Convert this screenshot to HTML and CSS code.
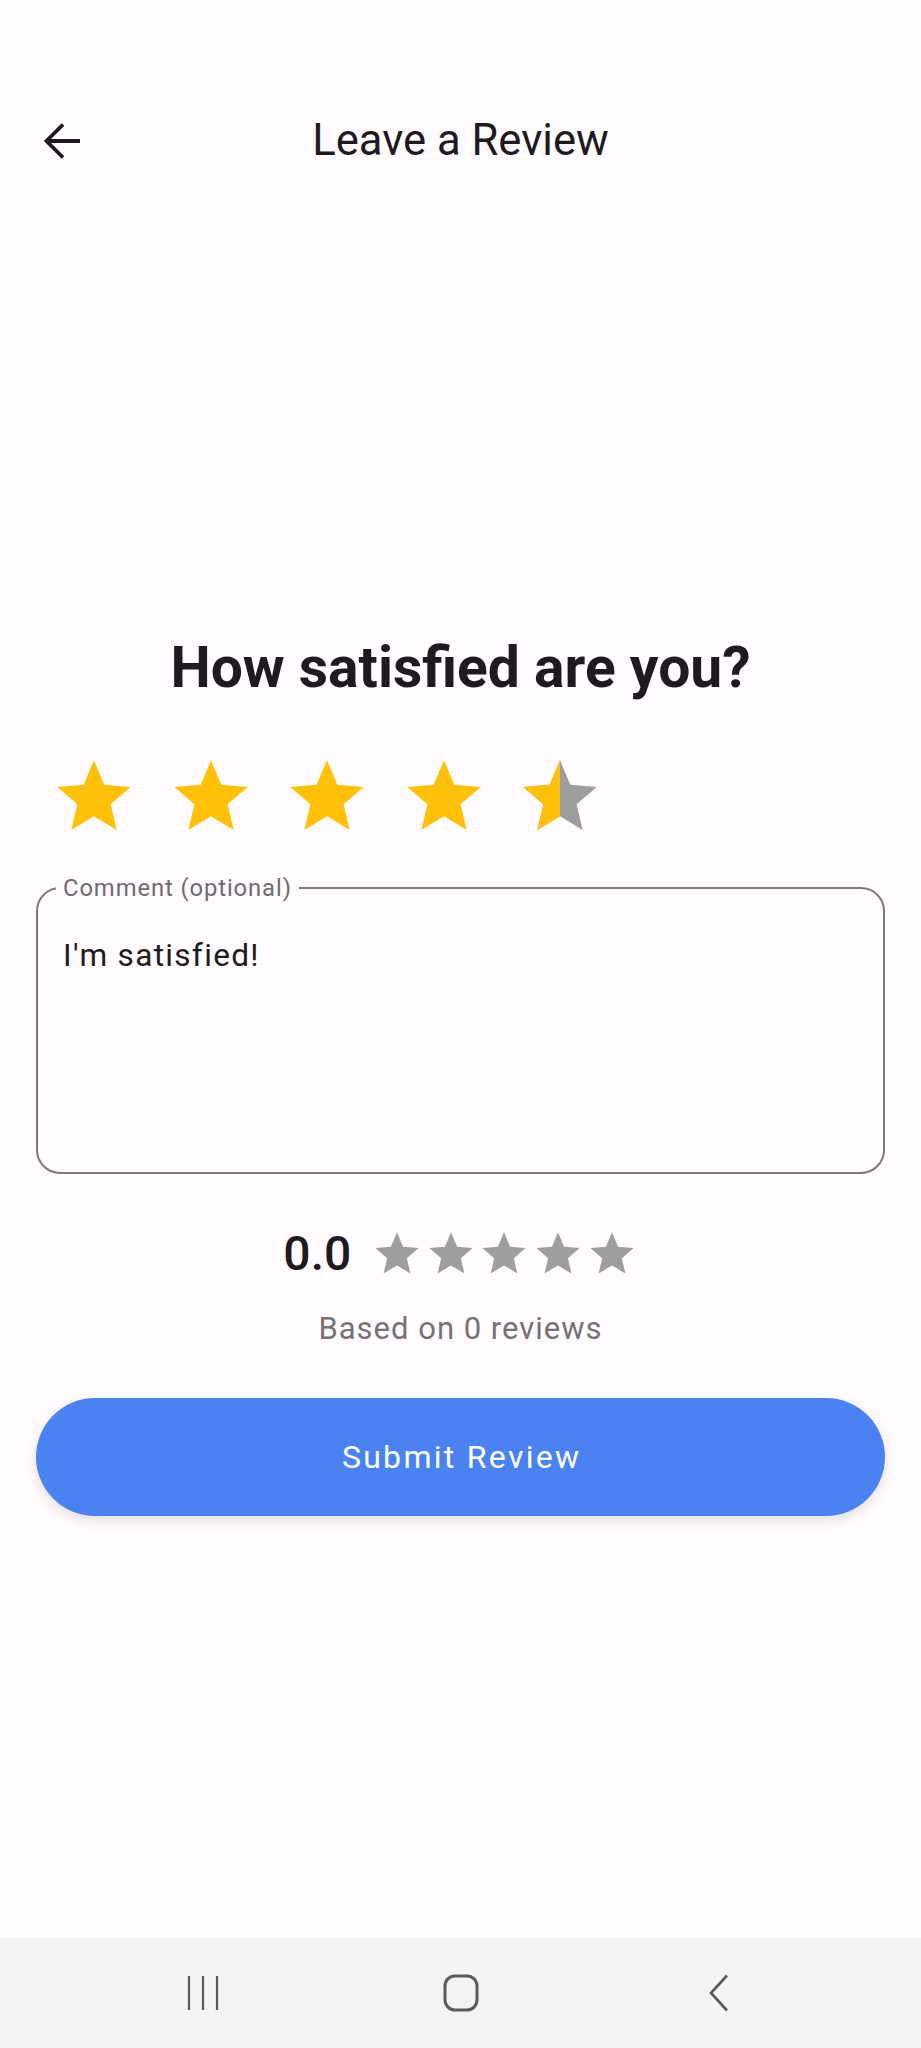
FILE: index.html
```html
<!DOCTYPE html>
<html lang="en">
<head>
<meta charset="utf-8">
<title>Leave a Review</title>
<link rel="stylesheet" href="styles.css">
</head>
<body>
<div class="screen">
  <div class="status-bar"></div>
  <header class="app-bar">
    <button class="back" aria-label="Back">
      <svg width="52" height="52" viewBox="0 0 52 52"><path d="M44 26H10.5M27 9.5L10.5 26 27 42.5" fill="none" stroke="#1d1b20" stroke-width="3.8"/></svg>
    </button>
    <h1 class="title">Leave a Review</h1>
    <span></span>
  </header>

  <main class="content">
    <h2 class="heading">How satisfied are you?</h2>

    <div class="stars">
      <svg class="star" viewBox="0 0 24 24"><path class="on" d="M12 17.27L18.18 21l-1.64-7.03L22 9.24l-7.19-.61L12 2 9.19 8.630 2 9.24l5.46 4.73L5.82 21z"/></svg>
      <svg class="star" viewBox="0 0 24 24"><path class="on" d="M12 17.27L18.18 21l-1.64-7.03L22 9.24l-7.19-.61L12 2 9.19 8.63 2 9.24l5.46 4.73L5.82 21z"/></svg>
      <svg class="star" viewBox="0 0 24 24"><path class="on" d="M12 17.27L18.18 21l-1.64-7.03L22 9.24l-7.19-.61L12 2 9.19 8.63 2 9.24l5.46 4.73L5.82 21z"/></svg>
      <svg class="star" viewBox="0 0 24 24"><path class="on" d="M12 17.27L18.18 21l-1.64-7.03L22 9.24l-7.19-.61L12 2 9.19 8.63 2 9.24l5.46 4.73L5.82 21z"/></svg>
      <svg class="star" viewBox="0 0 24 24">
        <defs><clipPath id="half"><rect x="0" y="0" width="12" height="24"/></clipPath></defs>
        <path class="off" d="M12 17.27L18.18 21l-1.64-7.03L22 9.24l-7.19-.61L12 2 9.19 8.63 2 9.24l5.46 4.73L5.82 21z"/>
        <path class="on" clip-path="url(#half)" d="M12 17.27L18.18 21l-1.64-7.03L22 9.24l-7.19-.61L12 2 9.19 8.63 2 9.24l5.46 4.73L5.82 21z"/>
      </svg>
    </div>

    <fieldset class="comment">
      <legend class="comment-label">Comment (optional)</legend>
      <div class="comment-text">I'm satisfied!</div>
    </fieldset>

    <div class="rating">
      <span class="score">0.0</span>
      <div class="mini-stars">
        <svg class="mini" viewBox="0 0 24 24"><path d="M12 17.27L18.18 21l-1.64-7.03L22 9.24l-7.19-.61L12 2 9.19 8.63 2 9.24l5.46 4.73L5.82 21z"/></svg>
        <svg class="mini" viewBox="0 0 24 24"><path d="M12 17.27L18.18 21l-1.64-7.03L22 9.24l-7.19-.61L12 2 9.19 8.63 2 9.24l5.46 4.73L5.82 21z"/></svg>
        <svg class="mini" viewBox="0 0 24 24"><path d="M12 17.27L18.18 21l-1.64-7.03L22 9.24l-7.19-.61L12 2 9.19 8.63 2 9.24l5.46 4.73L5.82 21z"/></svg>
        <svg class="mini" viewBox="0 0 24 24"><path d="M12 17.27L18.18 21l-1.64-7.03L22 9.24l-7.19-.61L12 2 9.19 8.63 2 9.24l5.46 4.73L5.82 21z"/></svg>
        <svg class="mini" viewBox="0 0 24 24"><path d="M12 17.27L18.18 21l-1.64-7.03L22 9.24l-7.19-.61L12 2 9.19 8.63 2 9.24l5.46 4.73L5.82 21z"/></svg>
      </div>
    </div>
    <p class="based">Based on 0 reviews</p>

    <button class="submit"><span class="submit-label">Submit Review</span></button>
  </main>

  <div class="spacer"></div>

  <nav class="nav-bar">
    <span class="nav-item">
      <svg width="34" height="36" viewBox="0 0 34 36"><path d="M3 1v34M17 1v34M31 1v34" stroke="#5a5a5a" stroke-width="2.2" fill="none"/></svg>
    </span>
    <span class="nav-item">
      <svg width="38" height="38" viewBox="0 0 38 38"><rect x="3" y="2" width="32" height="34" rx="10" fill="none" stroke="#5a5a5a" stroke-width="3"/></svg>
    </span>
    <span class="nav-item">
      <svg width="24" height="38" viewBox="0 0 24 38"><path d="M20 1.5L4 19l16 17.5" fill="none" stroke="#5a5a5a" stroke-width="2.6"/></svg>
    </span>
  </nav>
</div>
</body>
</html>
```

FILE: styles.css
```css
* { box-sizing: border-box; }

html, body {
  margin: 0;
  padding: 0;
}

body {
  background: #fffbfe;
  font-family: Roboto, "Noto Sans", sans-serif;
  color: #1d1b20;
}

.screen {
  width: 921px;
  min-height: 2048px;
  display: flex;
  flex-direction: column;
}

.status-bar {
  height: 77px;
}

.app-bar {
  height: 127px;
  padding: 0 36px;
  display: grid;
  grid-template-columns: 52px 1fr 52px;
  align-items: center;
}

.back {
  width: 52px;
  height: 52px;
  padding: 0;
  border: 0;
  background: none;
  display: flex;
}

.title {
  margin: 0;
  text-align: center;
  font-weight: 400;
  font-size: 43.6px;
  line-height: 52px;
  color: #1d1b20;
}

.content {
  padding: 428px 36px 0;
}

.heading {
  margin: 0;
  text-align: center;
  font-weight: 700;
  font-size: 57px;
  line-height: 72px;
  color: #1d1b20;
}

.stars {
  display: flex;
  gap: 28.5px;
  margin-top: 49px;
  padding-left: 14px;
}

.star {
  width: 88px;
  height: 88px;
  display: block;
}

.on { fill: #ffc107; }
.off { fill: #9e9e9e; }

.comment {
  margin: 34px 0 0;
  padding: 0;
  border: 2px solid #7c7a7c;
  border-radius: 24px;
  min-inline-size: 0;
}

.comment-label {
  margin-left: 18px;
  padding: 0 7px;
  font-size: 23.8px;
  line-height: 26px;
  letter-spacing: 0.9px;
  color: #6e6c70;
}

.comment-text {
  padding: 33px 25px 0;
  height: 271px;
  font-size: 31.6px;
  line-height: 44px;
  letter-spacing: 1.3px;
  color: #1d1b20;
}

.rating {
  margin-top: 54px;
  display: flex;
  justify-content: center;
  align-items: center;
  gap: 20px;
}

.score {
  font-size: 48px;
  font-weight: 500;
  line-height: 52px;
  color: #1d1b20;
}

.mini-stars {
  display: flex;
  gap: 1.6px;
}

.mini {
  width: 52px;
  height: 52px;
  display: block;
  fill: #9e9e9e;
}

.based {
  margin: 29px 0 0;
  text-align: center;
  font-size: 31px;
  line-height: 40px;
  letter-spacing: 1px;
  color: #747275;
}

.submit {
  display: block;
  width: 100%;
  height: 118px;
  margin-top: 49px;
  border: 0;
  border-radius: 59px;
  background: #4a83f1;
  color: #ffffff;
  font-family: Roboto, "Noto Sans", sans-serif;
  font-size: 32px;
  font-weight: 400;
  box-shadow: 0 5px 12px rgba(80, 60, 60, 0.14);
}

.submit-label {
  letter-spacing: 2.3px;
  margin-right: -2.3px;
}

.spacer {
  flex: 1;
}

.nav-bar {
  height: 110px;
  background: #f4f4f4;
  display: flex;
  justify-content: center;
  align-items: center;
}

.nav-item {
  width: 258px;
  display: flex;
  justify-content: center;
  align-items: center;
}

.nav-item svg { display: block; }
```
